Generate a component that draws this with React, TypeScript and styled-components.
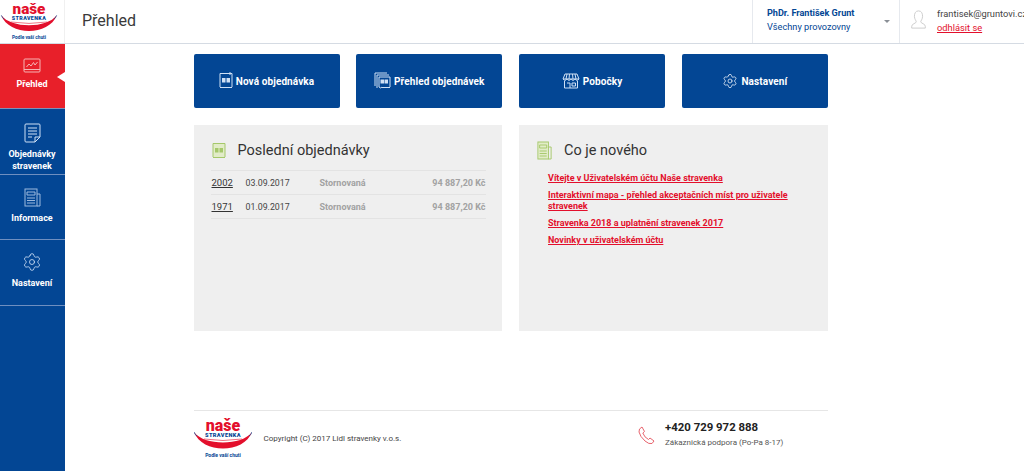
import React from "react";
import styled, { createGlobalStyle } from "styled-components";
import { Settings } from "lucide-react";

const Global = createGlobalStyle`
  html, body { margin: 0; padding: 0; background: #fff; overflow: hidden; }
  body { font-family: Roboto, "Liberation Sans", sans-serif; width: 1024px; height: 471px; }
  * { box-sizing: border-box; }
`;

const Page = styled.div`
  width: 1024px;
  height: 471px;
  display: flex;
  flex-direction: column;
  overflow: hidden;
`;
const Header = styled.header`
  height: 44px;
  flex: none;
  display: flex;
  align-items: stretch;
  border-bottom: 1px solid #d5dbe3;
`;
const LogoBox = styled.div`
  width: 65px;
  flex: none;
  display: flex;
  align-items: flex-start;
  padding-top: 1px;
  border-right: 1px solid #f0f0f0;
`;
const Title = styled.h1`
  margin: 0 0 0 17px;
  flex: 1;
  font-size: 16px;
  font-weight: 400;
  line-height: 42px;
  color: #3a3a3a;
`;
const Account = styled.div`
  width: 147px;
  flex: none;
  border-left: 1px solid #e6e9ee;
  padding: 6px 0 0 14px;
  position: relative;
`;
const AccountName = styled.div`
  font-size: 9.1px;
  font-weight: 700;
  line-height: 14px;
  color: #034694;
`;
const AccountSub = styled.div`
  font-size: 9.2px;
  line-height: 14px;
  color: #034694;
`;
const Caret = styled.span`
  position: absolute;
  right: 9px;
  top: 20px;
  border-left: 3px solid transparent;
  border-right: 3px solid transparent;
  border-top: 3px solid #8a8f96;
`;
const User = styled.div`
  flex: none;
  width: 125px;
  border-left: 1px solid #e6e9ee;
  display: flex;
  padding: 7px 0 0 10px;
  gap: 10px;
  white-space: nowrap;
  overflow: hidden;
`;
const UserIcon = styled.svg`
  width: 17px;
  height: 19px;
  margin-top: 3px;
  flex: none;
`;
const UserText = styled.div`
  font-size: 9.3px;
  line-height: 14px;
  color: #444;
`;
const Logout = styled.a`
  display: block;
  color: #e30f2c;
  text-decoration: underline;
`;
const Body = styled.div`
  flex: 1;
  display: flex;
  min-height: 0;
`;
const Sidebar = styled.nav`
  width: 65px;
  flex: none;
  background: #034694;
  display: flex;
  flex-direction: column;
`;
const NavItem = styled.a<{ $active?: boolean; $h: number; $top: number }>`
  height: ${(p) => p.$h}px;
  flex: none;
  position: relative;
  display: flex;
  flex-direction: column;
  align-items: center;
  padding: ${(p) => p.$top}px 1px 0 0;
  background: ${(p) => (p.$active ? "#e8202a" : "#034694")};
  border-bottom: 1px solid ${(p) => (p.$active ? "#7f90b8" : "#6f8fc0")};
  color: #fff;
  font-size: 9px;
  font-weight: 700;
  line-height: 11.5px;
  text-align: center;
  ${(p) =>
    p.$active &&
    `&::after {
      content: "";
      position: absolute;
      right: 0;
      top: 28px;
      border-top: 5px solid transparent;
      border-bottom: 5px solid transparent;
      border-right: 8px solid #fff;
    }`}
`;
const NavIcon = styled.span<{ $gap: number }>`
  height: 20px;
  margin-bottom: ${(p) => p.$gap}px;
  display: flex;
  align-items: center;
  justify-content: center;
  color: #cfe0f5;
`;
const Main = styled.main`
  flex: 1;
  padding: 10px 0 0 128.5px;
  display: flex;
  flex-direction: column;
`;
const Column = styled.div`
  width: 634.5px;
  display: flex;
  flex-direction: column;
`;
const Buttons = styled.div`
  display: grid;
  grid-template-columns: 146px 146px 146px 146px;
  column-gap: 16.8px;
`;
const ActionButton = styled.a`
  height: 54px;
  background: #034694;
  border-radius: 2px;
  color: #fff;
  font-size: 10px;
  font-weight: 700;
  letter-spacing: 0.1px;
  display: flex;
  align-items: center;
  justify-content: center;
  gap: 3px;
`;
const Panels = styled.div`
  margin-top: 17px;
  display: grid;
  grid-template-columns: 308px 309px;
  column-gap: 17.5px;
`;
const Panel = styled.section`
  height: 206px;
  background: #efefef;
  padding: 15px 17px 0 18px;
`;
const PanelHead = styled.div`
  display: flex;
  align-items: center;
  gap: 12px;
  height: 21px;
  font-size: 14.5px;
  color: #333;
`;
const OrderTable = styled.div`
  margin: 9px 0 0 -1px;
  border-top: 1px solid #e3e3e3;
  width: 275px;
`;
const OrderRow = styled.div`
  height: 24px;
  display: grid;
  grid-template-columns: 34px 74px 1fr auto;
  align-items: center;
  border-bottom: 1px solid #e3e3e3;
  padding-left: 1px;
  font-size: 8.8px;
  color: #444;
`;
const OrderId = styled.a`
  font-size: 9.5px;
  text-decoration: underline;
  color: #333;
`;
const Status = styled.span`
  font-weight: 700;
  font-size: 9px;
  color: #a2a2a2;
`;
const Amount = styled(Status)``;
const News = styled.ul`
  list-style: none;
  margin: 12px 0 0;
  padding: 0 0 0 11px;
  width: 270px;
`;
const NewsItem = styled.li`
  margin-bottom: 6px;
  font-size: 9px;
  font-weight: 700;
  line-height: 11px;
  color: #e30f2c;
  text-decoration: underline;
`;
const Footer = styled.footer`
  margin-top: 79px;
  border-top: 1px solid #e6e6e6;
  padding-top: 6px;
  display: flex;
  align-items: flex-start;
`;
const Copyright = styled.div`
  margin: 16px 0 0 12px;
  flex: 1;
  font-size: 8px;
  line-height: 12px;
  color: #444;
`;
const PhoneIcon = styled.svg`
  width: 17px;
  height: 19px;
  margin: 8.5px 10px 0 0;
`;
const Contact = styled.div`
  width: 163px;
  padding-top: 2px;
`;
const Phone = styled.div`
  font-size: 11.4px;
  font-weight: 700;
  line-height: 16px;
  color: #222;
`;
const Hours = styled.div`
  margin-top: 2px;
  font-size: 8px;
  line-height: 12px;
  color: #555;
`;

const Logo = ({ w, h }: { w: number; h: number }) => (
  <svg width={w} height={h} viewBox="0 0 58 44">
    <text x="29" y="14" textAnchor="middle" fontFamily="Roboto, sans-serif" fontWeight="900" fontSize="16" fill="#e30f2c">naše</text>
    <text x="29" y="20" textAnchor="middle" fontFamily="Roboto, sans-serif" fontWeight="900" fontSize="5.6" letterSpacing="0.4" fill="#034694">STRAVENKA</text>
    <path d="M0 15 C8 37 50 37 58 15 C48 29 10 29 0 15 Z" fill="#e30f2c" />
    <path d="M10 22 Q29 25 48 22" fill="none" stroke="#e30f2c" strokeWidth="0.6" />
    <path d="M0 15 Q1 18 3 19 M58 15 Q57 18 55 19" fill="none" stroke="#034694" strokeWidth="0.7" />
    <text x="29" y="40" textAnchor="middle" fontFamily="Roboto, sans-serif" fontWeight="700" fontSize="5" fill="#034694">Podle vaší chuti</text>
  </svg>
);

const ChartIcon = () => (
  <svg width="18" height="16" viewBox="0 0 18 16" fill="none" stroke="#f6b4b4" strokeWidth="1">
    <rect x="1" y="1" width="16" height="13" rx="1" />
    <path d="M1 11.5 H17" />
    <path d="M3.5 9 L6 6 L8 8 L10.5 4.5 L12 7 L14.5 4" />
  </svg>
);
const DocIcon = () => (
  <svg width="17" height="20" viewBox="0 0 17 20" fill="none" stroke="#cfe0f5" strokeWidth="1">
    <path d="M2 1 H15 Q16 1 16 2 V14 L11 19 H2 Q1 19 1 18 V2 Q1 1 2 1 Z" />
    <path d="M11 19 V14 H16 M4 5 H13 M4 8 H13 M4 11 H13 M4 14 H8" />
  </svg>
);
const NewsIcon = ({ c = "#9db9dd", w = 17, fill = "none" }: { c?: string; w?: number; fill?: string }) => (
  <svg width={w} height="19" viewBox="0 0 17 19" preserveAspectRatio="none" fill={fill} stroke={c} strokeWidth="1">
    <rect x="1" y="1" width="12" height="17" />
    <path d="M13 6 H16 V18 H13 M3 4 H11 V7 H3 Z M3 10 H11 M3 12.5 H11 M3 15 H11" fill="none" />
  </svg>
);
const TicketIcon = ({ c = "#cfe0f5", plus, fill = "none" }: { c?: string; plus?: boolean; fill?: string }) => (
  <svg width="14" height="18" viewBox="0 0 14 18" fill={fill} stroke={c} strokeWidth="1">
    <path d="M1 1.5 H13 V15 Q12 17 11 15 Q10 17 9 15 Q8 17 7 15 Q6 17 5 15 Q4 17 3 15 Q2 17 1 15 Z" />
    <rect x="3.5" y="6.5" width="2.5" height="3.5" fill={c} />
    <rect x="8" y="6.5" width="2.5" height="3.5" fill={c} />
    {plus && <path d="M11 0 V3 M9.5 1.5 H12.5" />}
  </svg>
);
const TicketsIcon = () => (
  <svg width="17" height="19" viewBox="0 0 17 19" fill="none" stroke="#cfe0f5" strokeWidth="1">
    <path d="M1 14 V1 H13 M3 16 V3 H15" />
    <path d="M5 5 H16 V15 Q15 17 14 15 Q13 17 12 15 Q11 17 10 15 Q9 17 8 15 Q7 17 5 15 Z" />
    <rect x="7" y="8" width="2.5" height="3" fill="#cfe0f5" />
    <rect x="11" y="8" width="2.5" height="3" fill="#cfe0f5" />
  </svg>
);
const ShopIcon = () => (
  <svg width="18" height="16" viewBox="0 0 18 16" fill="none" stroke="#cfe0f5" strokeWidth="1">
    <path d="M3 1 H15 L17 6 H1 Z M5 1 L4 6 M7.5 1 L7 6 M10.5 1 L11 6 M13 1 L14 6" />
    <path d="M1 6 Q3 9 5 6 Q7 9 9 6 Q11 9 13 6 Q15 9 17 6" />
    <path d="M2.5 8 V15 H15.5 V8 M5 10 H8 V15 M10 10 H13.5 V13 H10 Z" />
  </svg>
);

export default function App() {
  return (
    <Page>
      <Global />
      <Header>
        <LogoBox>
          <Logo w={58} h={42} />
        </LogoBox>
        <Title>Přehled</Title>
        <Account>
          <AccountName>PhDr. František Grunt</AccountName>
          <AccountSub>Všechny provozovny</AccountSub>
          <Caret />
        </Account>
        <User>
          <UserIcon viewBox="0 0 17 21" fill="none" stroke="#c9c9c9" strokeWidth="1">
            <path d="M8.5 1 C5 1 4 4 4 7 C4 10 6 12 6 13 C6 15 1 15 1 18 V20 H16 V18 C16 15 11 15 11 13 C11 12 13 10 13 7 C13 4 12 1 8.5 1 Z" />
          </UserIcon>
          <UserText>
            frantisek@gruntovi.cz
            <Logout>odhlásit se</Logout>
          </UserText>
        </User>
      </Header>
      <Body>
        <Sidebar>
          <NavItem $active $h={65} $top={12}>
            <NavIcon $gap={3}><ChartIcon /></NavIcon>
            Přehled
          </NavItem>
          <NavItem $h={66} $top={14}>
            <NavIcon $gap={6}><DocIcon /></NavIcon>
            Objednávky
            <br />
            stravenek
          </NavItem>
          <NavItem $h={65} $top={12}>
            <NavIcon $gap={6}><NewsIcon /></NavIcon>
            Informace
          </NavItem>
          <NavItem $h={66} $top={12}>
            <NavIcon $gap={6}><Settings size={20} strokeWidth={1} /></NavIcon>
            Nastavení
          </NavItem>
        </Sidebar>
        <Main>
          <Column>
            <Buttons>
              <ActionButton><TicketIcon plus /> Nová objednávka</ActionButton>
              <ActionButton><TicketsIcon /> Přehled objednávek</ActionButton>
              <ActionButton><ShopIcon /> Pobočky</ActionButton>
              <ActionButton><Settings size={16} strokeWidth={1.2} color="#e6eef8" /> Nastavení</ActionButton>
            </Buttons>
            <Panels>
              <Panel>
                <PanelHead>
                  <TicketIcon c="#a5c86a" fill="#e2ecc8" />
                  Poslední objednávky
                </PanelHead>
                <OrderTable>
                  <OrderRow>
                    <OrderId>2002</OrderId>
                    <span>03.09.2017</span>
                    <Status>Stornovaná</Status>
                    <Amount>94 887,20 Kč</Amount>
                  </OrderRow>
                  <OrderRow>
                    <OrderId>1971</OrderId>
                    <span>01.09.2017</span>
                    <Status>Stornovaná</Status>
                    <Amount>94 887,20 Kč</Amount>
                  </OrderRow>
                </OrderTable>
              </Panel>
              <Panel>
                <PanelHead>
                  <NewsIcon c="#a5c86a" w={15} fill="#e2ecc8" />
                  Co je nového
                </PanelHead>
                <News>
                  <NewsItem>Vítejte v Uživatelském účtu Naše stravenka</NewsItem>
                  <NewsItem>Interaktivní mapa - přehled akceptačních míst pro uživatele stravenek</NewsItem>
                  <NewsItem>Stravenka 2018 a uplatnění stravenek 2017</NewsItem>
                  <NewsItem>Novinky v uživatelském účtu</NewsItem>
                </News>
              </Panel>
            </Panels>
            <Footer>
              <Logo w={58} h={44} />
              <Copyright>Copyright (C) 2017 Lidl stravenky v.o.s.</Copyright>
              <PhoneIcon viewBox="0 0 17 19" fill="none" stroke="#e8646e" strokeWidth="1">
                <path d="M1.5 3 L4 1 L6.5 5.5 L4.8 7 Q6.5 11.5 10.5 13.5 L12 12 L16 15 L14 17.5 Q11 18.5 7 15 Q2 10.5 1 6 Z" />
              </PhoneIcon>
              <Contact>
                <Phone>+420 729 972 888</Phone>
                <Hours>Zákaznická podpora (Po-Pa 8-17)</Hours>
              </Contact>
            </Footer>
          </Column>
        </Main>
      </Body>
    </Page>
  );
}
